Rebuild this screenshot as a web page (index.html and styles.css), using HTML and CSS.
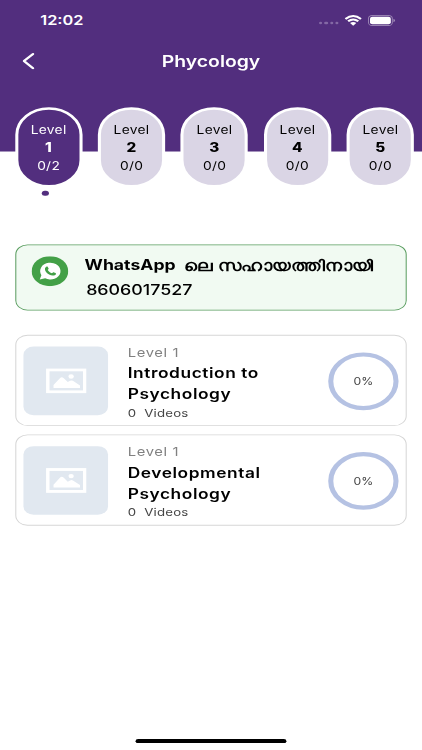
FILE: index.html
```html
<!DOCTYPE html>
<html lang="en">
<head>
    <meta charset="UTF-8">
    <meta name="viewport" content="width=device-width, initial-scale=1.0">
    <title>Phycology</title>
    <link rel="stylesheet" href="styles.css">
</head>
<body>
    <!-- Shared icon for course thumbnails -->
    <svg width="0" height="0" class="symbols">
        <symbol id="picture" viewBox="0 0 40 30">
            <rect x="1.9" y="1.9" width="36.2" height="26.2" fill="none" stroke="#fff" stroke-width="3.4"/>
            <path d="M7.5 23.5v-3.5l6.5-8.5q1.6-1.6 3.3 0l4.2 5 2.2-1.5q1.4-1 2.8 0l7 5.5v3z" fill="#fff"/>
            <circle cx="24.8" cy="9.8" r="2.6" fill="#fff"/>
        </symbol>
    </svg>

    <div class="screen">
        <header class="header">
            <div class="status-bar">
                <span class="time">12:02</span>
                <div class="status-icons">
                    <div class="signal"><i></i><i></i><i></i><i></i></div>
                    <svg class="wifi" width="17" height="13" viewBox="0 0 16 12">
                        <path d="M.8 4.2Q8-2.2 15.2 4.2M3.3 6.8Q8 2.7 12.7 6.8" fill="none" stroke="#fff" stroke-width="2.2"/>
                        <path d="M5.1 8.8Q8 6.6 10.9 8.8L8 12z" fill="#fff"/>
                    </svg>
                    <svg class="battery" width="27" height="13" viewBox="0 0 27 13">
                        <rect x=".5" y=".5" width="23.4" height="12" rx="3.6" fill="none" stroke="#fff" stroke-opacity=".4"/>
                        <rect x="2" y="2" width="20.4" height="9" rx="2.3" fill="#fff"/>
                        <path d="M25 4.3v4.4q1.5-.7 1.5-2.2T25 4.3" fill="#fff" fill-opacity=".45"/>
                    </svg>
                </div>
            </div>
            <div class="nav-bar">
                <svg class="back" width="12" height="20" viewBox="0 0 12 20">
                    <path d="M10.4 1.5L1.5 10l8.9 8.5" fill="none" stroke="#fff" stroke-width="2.5" stroke-linecap="round" stroke-linejoin="round"/>
                </svg>
                <h1>Phycology</h1>
            </div>
        </header>

        <nav class="levels">
            <div class="level active"><span>Level</span><b>1</b><span>0/2</span></div>
            <div class="level"><span>Level</span><b>2</b><span>0/0</span></div>
            <div class="level"><span>Level</span><b>3</b><span>0/0</span></div>
            <div class="level"><span>Level</span><b>4</b><span>0/0</span></div>
            <div class="level"><span>Level</span><b>5</b><span>0/0</span></div>
        </nav>
        <div class="dot"></div>

        <section class="whatsapp">
            <svg width="36" height="36" viewBox="0 0 36 36">
                <circle cx="18" cy="18" r="18" fill="#43a047"/>
                <path d="M8 28l1.6-5.3a10 10 0 1 1 3.7 3.8z" fill="#fff"/>
                <path d="M14.4 12.8c.6-.5 1.2-.4 1.5.2l.8 1.9c.2.6-.5 1.1-.9 1.7 1 1.9 2.4 3.1 4.2 3.8.5-.4.9-1.3 1.5-1.2l2 1c.5.3.5.7.3 1.3-.5 1.3-1.9 1.9-3.2 1.7-4.2-.8-7.4-4.1-7.5-7.8 0-1.1.5-2 1.3-2.6z" fill="#43a047"/>
            </svg>
            <div class="contact">
                <p class="help"><span class="brand">WhatsApp</span> <span class="malayalam" lang="ml">ലെ സഹായത്തിനായി</span></p>
                <p class="phone">8606017527</p>
            </div>
        </section>

        <main class="courses">
            <article class="course">
                <div class="thumb"><svg width="40" height="30"><use href="#picture"/></svg></div>
                <div class="info">
                    <p class="tag">Level 1</p>
                    <h2>Introduction to Psychology</h2>
                    <p class="videos">0&nbsp; Videos</p>
                </div>
                <div class="progress">0%</div>
            </article>
            <article class="course">
                <div class="thumb"><svg width="40" height="30"><use href="#picture"/></svg></div>
                <div class="info">
                    <p class="tag">Level 1</p>
                    <h2>Developmental Psychology</h2>
                    <p class="videos">0&nbsp; Videos</p>
                </div>
                <div class="progress">0%</div>
            </article>
        </main>

        <div class="home-bar"></div>
    </div>
</body>
</html>
```
FILE: styles.css
```css
* {
    box-sizing: border-box;
    margin: 0;
    padding: 0;
}
html {
    overflow: hidden;
}
body {
    width: 422px;
    height: 750px;
    overflow: hidden;
    background: #fff;
    font-family: Inter, "Liberation Sans", sans-serif;
}
.symbols {
    display: block;
}
/* 414x896 phone layout fitted to the window */
.screen {
    width: 414px;
    height: 896px;
    margin-bottom: -146px;
    display: flex;
    flex-direction: column;
    transform: scale(1.01932, 0.83705);
    transform-origin: 0 0;
    color: #000;
}
.header {
    height: 181px;
    flex: none;
    background: #522e7e;
    color: #fff;
}
.status-bar {
    display: flex;
    justify-content: space-between;
    align-items: center;
    height: 48px;
    padding: 0 26px 0 39.5px;
}
.time {
    font-size: 16px;
    font-weight: 600;
    line-height: 20px;
}
.status-icons {
    display: flex;
    align-items: center;
}
.signal {
    display: flex;
    gap: 2px;
    margin: 7px 6px 0 0;
}
.signal i {
    width: 3.2px;
    height: 3.2px;
    border-radius: 50%;
    background: #8469a5;
}
.wifi {
    margin-right: 6px;
}
.nav-bar {
    display: flex;
    align-items: center;
    height: 50px;
    padding: 0 21.5px;
}
h1 {
    flex: 1;
    padding-right: 12px;
    text-align: center;
    font-size: 19px;
    font-weight: 600;
}
.levels {
    display: flex;
    gap: 15.4px;
    margin: -53.5px 0 0 14.7px;
}
.level {
    display: flex;
    flex-direction: column;
    align-items: center;
    flex: none;
    width: 66px;
    height: 96px;
    padding-top: 14.4px;
    border: 3px solid #fff;
    border-radius: 33px;
    background: #dad5e5;
    font-size: 13.5px;
    line-height: 21.6px;
    letter-spacing: 0.3px;
}
.level b {
    font-size: 15px;
    font-weight: 800;
}
.level.active {
    background: #522e7e;
    color: #fff;
}
.dot {
    width: 6.5px;
    height: 6.5px;
    margin: 4px 0 0 41.4px;
    border-radius: 50%;
    background: #522e7e;
}
.whatsapp {
    display: flex;
    width: 384px;
    height: 79px;
    margin: 57.5px 15px 0;
    padding: 13px 15px;
    border: 1.3px solid #5b9e61;
    border-radius: 12px;
    background: #f1faf2;
}
.contact {
    margin-left: 16px;
}
.help {
    display: flex;
    gap: 8px;
    font-size: 17.3px;
    font-weight: 700;
    line-height: 22px;
    white-space: nowrap;
}
.malayalam {
    font-size: 18.4px;
    letter-spacing: 0.4px;
}
.phone {
    padding-left: 1.5px;
    font-size: 17.5px;
    font-weight: 500;
    line-height: 36px;
}
.courses {
    display: flex;
    flex-direction: column;
    gap: 10px;
    margin: 29.6px 15px 0;
}
.course {
    display: flex;
    height: 109px;
    padding: 12.5px 7px;
    border: 1.2px solid #d6d6d6;
    border-radius: 12px;
}
.thumb {
    display: flex;
    align-items: center;
    justify-content: center;
    width: 83px;
    height: 82.5px;
    border-radius: 10px;
    background: #e1e8f0;
}
.info {
    width: 180px;
    margin-left: 19.3px;
    margin-top: -5px;
}
.tag {
    font-size: 14.5px;
    line-height: 23px;
    letter-spacing: 0.6px;
    color: #808080;
}
h2 {
    padding-top: 2px;
    font-size: 17px;
    font-weight: 600;
    line-height: 25px;
    letter-spacing: 0.55px;
}
.videos {
    font-size: 13px;
    line-height: 19px;
    letter-spacing: 0.2px;
    color: #444;
}
.progress {
    display: flex;
    align-items: center;
    justify-content: center;
    width: 69px;
    height: 69px;
    margin: 7px 0 0 16.7px;
    border: 5px solid #b5c2e3;
    border-radius: 50%;
    font-size: 12px;
    color: #444;
}
.home-bar {
    width: 148px;
    height: 5px;
    margin: auto auto 8px 133.4px;
    border-radius: 3px;
    background: #000;
}
```
